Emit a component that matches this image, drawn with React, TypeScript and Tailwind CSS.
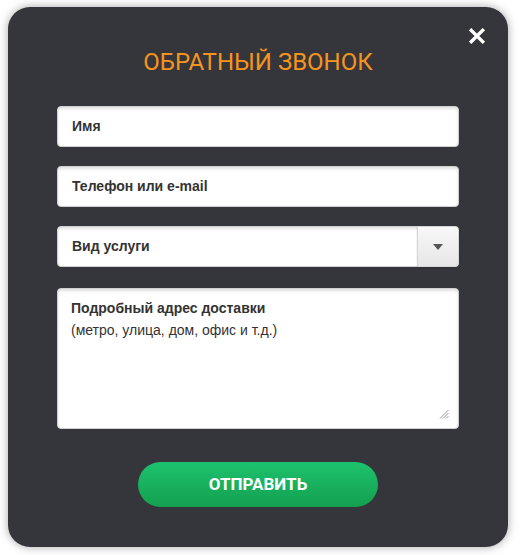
import React from "react";

export default function App() {
  const field =
    "h-[41px] w-full rounded-[4px] border border-[#cfcfcf] bg-white shadow-[inset_0_2px_3px_rgba(0,0,0,0.12)] flex items-center px-[14px] text-[14px] font-bold text-[#333]";
  return (
    <div className="w-[531px] h-[555px] bg-white pl-[8px] pt-[7px]" style={{ fontFamily: '"Liberation Sans", Arial, sans-serif' }}>
      <div className="relative w-[500px] h-[540px] rounded-[22px] bg-[#35363b] shadow-[0_0_10px_rgba(0,0,0,0.35)] px-[49px] pt-[40px] flex flex-col">
        <button className="absolute right-[23px] top-[21px] w-[16px] h-[16px] flex items-center justify-center">
          <svg width="17" height="16" viewBox="0 0 17 16">
            <path d="M2.5 2 L14.5 14 M14.5 2 L2.5 14" stroke="#fff" strokeWidth="3.6" strokeLinecap="square" />
          </svg>
        </button>
        <h2
          className="text-center text-[24px] leading-[30px] text-[#f7941d]"
          style={{ fontFamily: 'Roboto, "Liberation Sans", sans-serif' }}
        >
          ОБРАТНЫЙ ЗВОНОК
        </h2>
        <div className="mt-[29px] flex flex-col">
          <div className={field}>Имя</div>
          <div className={field + " mt-[19px]"}>Телефон или e-mail</div>
          <div className="mt-[19px] h-[41px] w-full rounded-[4px] border border-[#cfcfcf] bg-white shadow-[inset_0_2px_3px_rgba(0,0,0,0.12)] flex items-stretch text-[14px] font-bold text-[#333]">
            <div className="flex-1 flex items-center px-[14px]">Вид услуги</div>
            <div className="w-[42px] -my-px -mr-px rounded-r-[4px] border border-[#d6d6d6] bg-gradient-to-b from-[#f8f8f8] to-[#e6e6e6] shadow-[0_1px_2px_rgba(0,0,0,0.15)] flex items-center justify-center">
              <svg width="10" height="6" viewBox="0 0 10 6">
                <path d="M0 0 H10 L5 6 Z" fill="#555" />
              </svg>
            </div>
          </div>
          <div className="relative mt-[21px] h-[141px] w-full rounded-[4px] border border-[#cfcfcf] bg-white shadow-[inset_0_2px_3px_rgba(0,0,0,0.12)] px-[13px] pt-[8px] text-[14px] leading-[22px] text-[#333]">
            <div className="font-bold">Подробный адрес доставки</div>
            <div>(метро, улица, дом, офис и т.д.)</div>
            <svg className="absolute right-[9px] bottom-[9px]" width="10" height="10" viewBox="0 0 10 10">
              <path d="M9.5 1 L1 9.5 M9.5 4 L4 9.5 M9.5 7 L7 9.5" stroke="#999" strokeWidth="1" />
            </svg>
          </div>
        </div>
        <div className="mt-[33px] flex justify-center">
          <button
            className="w-[240px] h-[45px] rounded-full bg-gradient-to-b from-[#1dc26e] to-[#14a04f] text-white text-[17px] font-bold"
            style={{ fontFamily: 'Roboto, "Liberation Sans", sans-serif' }}
          >
            ОТПРАВИТЬ
          </button>
        </div>
      </div>
    </div>
  );
}
